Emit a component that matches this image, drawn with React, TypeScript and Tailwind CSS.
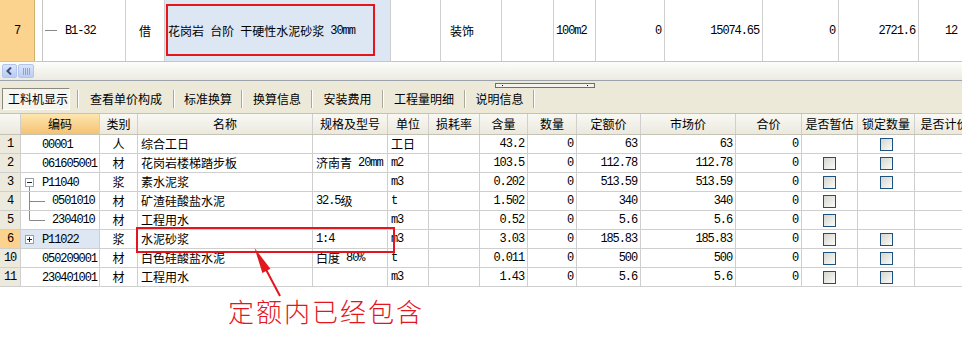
import React from 'react'

const MONO = "font-['Liberation_Mono',monospace] text-[12px] tracking-[-1.1px]"

function T({ s }: { s: string }) {
  const parts = s.split(/([\x20-\x7e]+)/).filter((p) => p !== '')
  return (
    <>
      {parts.map((p, i) =>
        /^[\x20-\x7e]+$/.test(p) ? (
          <span key={i} className={MONO}>
            {p}
          </span>
        ) : (
          <span key={i}>{p}</span>
        )
      )}
    </>
  )
}

function Check() {
  return <span className="block h-[13px] w-[13px] border border-[#1c5180] bg-linear-to-br from-[#d6d6cf] to-[#fbfbf8]" />
}

type Tree = 'plain' | 'minus' | 'plus' | 'child' | 'last'

function CodeCell({ tree, code }: { tree: Tree; code: string }) {
  if (tree === 'minus' || tree === 'plus') {
    return (
      <div className="flex items-center pl-[4px]">
        <svg width="13" height="19" viewBox="0 0 13 19" className="shrink-0">
          <rect x="0.5" y="5.5" width="8" height="8" fill="#fff" stroke="#97a0a8" />
          <line x1="2" y1="9.5" x2="7" y2="9.5" stroke="#222" />
          {tree === 'plus' && <line x1="4.5" y1="7" x2="4.5" y2="12" stroke="#222" />}
          {tree === 'minus' && <line x1="4.5" y1="14" x2="4.5" y2="19" stroke="#888" />}
        </svg>
        <span className="ml-[4px]">
          <T s={code} />
        </span>
      </div>
    )
  }
  if (tree === 'child' || tree === 'last') {
    return (
      <div className="flex items-center">
        <svg width="31" height="19" viewBox="0 0 31 19" className="shrink-0">
          <line x1="8.5" y1="0" x2="8.5" y2={tree === 'last' ? 9.5 : 19} stroke="#888" />
          <line x1="8.5" y1="9.5" x2="24" y2="9.5" stroke="#888" />
        </svg>
        <T s={code} />
      </div>
    )
  }
  return (
    <div className="pl-[21px]">
      <T s={code} />
    </div>
  )
}

const widths = [21, 79, 38, 175, 75, 41, 51, 48, 49, 64, 95, 66, 56, 57, 60]
const heads = ['', '编码', '类别', '名称', '规格及型号', '单位', '损耗率', '含量', '数量', '定额价', '市场价', '合价', '是否暂估', '锁定数量', '是否计价']

type Row = {
  n: string
  tree: Tree
  code: string
  cat: string
  name: string
  spec: string
  unit: string
  nums: string[]
  a: boolean
  b: boolean
  sel?: boolean
}

const rows: Row[] = [
  { n: '1', tree: 'plain', code: '00001', cat: '人', name: '综合工日', spec: '', unit: '工日', nums: ['43.2', '0', '63', '63', '0'], a: false, b: true },
  { n: '2', tree: 'plain', code: '061605001', cat: '材', name: '花岗岩楼梯踏步板', spec: '济南青 20mm', unit: 'm2', nums: ['103.5', '0', '112.78', '112.78', '0'], a: true, b: true },
  { n: '3', tree: 'minus', code: 'P11040', cat: '浆', name: '素水泥浆', spec: '', unit: 'm3', nums: ['0.202', '0', '513.59', '513.59', '0'], a: true, b: true },
  { n: '4', tree: 'child', code: '0501010', cat: '材', name: '矿渣硅酸盐水泥', spec: '32.5级', unit: 't', nums: ['1.502', '0', '340', '340', '0'], a: true, b: false },
  { n: '5', tree: 'last', code: '2304010', cat: '材', name: '工程用水', spec: '', unit: 'm3', nums: ['0.52', '0', '5.6', '5.6', '0'], a: true, b: false },
  { n: '6', tree: 'plus', code: 'P11022', cat: '浆', name: '水泥砂浆', spec: '1:4', unit: 'm3', nums: ['3.03', '0', '185.83', '185.83', '0'], a: true, b: true, sel: true },
  { n: '10', tree: 'plain', code: '050209001', cat: '材', name: '白色硅酸盐水泥', spec: '白度 80%', unit: 't', nums: ['0.011', '0', '500', '500', '0'], a: true, b: true },
  { n: '11', tree: 'plain', code: '230401001', cat: '材', name: '工程用水', spec: '', unit: 'm3', nums: ['1.43', '0', '5.6', '5.6', '0'], a: true, b: true },
]

const tabs: [string, number][] = [
  ['查看单价构成', 94],
  ['标准换算', 66],
  ['换算信息', 68],
  ['安装费用', 69],
  ['工程量明细', 80],
  ['说明信息', 67],
]

const cell = 'flex h-full shrink-0 items-center overflow-hidden whitespace-pre border-r border-[#cfcfcf]'

export default function App() {
  return (
    <div className="relative h-[354px] w-[962px] overflow-hidden bg-white font-['Noto_Sans_CJK_SC',sans-serif] text-[12px] leading-none text-black">
      {/* upper grid, last visible row */}
      <div className="flex h-[62px] border-b border-[#c4c4c4]">
        <div className="flex w-[35px] shrink-0 items-center justify-center border-r border-[#d0b070] bg-[#fbd38e]">
          <T s="7" />
        </div>
        <div className="w-[8px] shrink-0 border-r border-[#c4c4c4]" />
        <div className={`${cell} w-[83px] border-[#c4c4c4]`}>
          <span className="ml-[2px] mr-[8px] h-px w-[12px] bg-[#888]" />
          <T s="B1-32" />
        </div>
        <div className={`${cell} w-[39px] justify-center border-[#c4c4c4]`}>借</div>
        <div className={`${cell} w-[226px] border-[#c4c4c4] bg-[#dde6f3] pl-[3px]`}>
          <T s="花岗岩 台阶 干硬性水泥砂浆 30mm" />
        </div>
        <div className={`${cell} w-[50px] border-[#c4c4c4]`} />
        <div className={`${cell} w-[61px] border-[#c4c4c4] pl-[9px]`}>装饰</div>
        <div className={`${cell} w-[52px] border-[#c4c4c4]`} />
        <div className={`${cell} w-[42px] border-[#c4c4c4] pl-[2px]`}>
          <T s="100m2" />
        </div>
        <div className={`${cell} w-[69px] justify-end border-[#c4c4c4] pr-[3px]`}>
          <T s="0" />
        </div>
        <div className={`${cell} w-[98px] justify-end border-[#c4c4c4] pr-[3px]`}>
          <T s="15074.65" />
        </div>
        <div className={`${cell} w-[76px] justify-end border-[#c4c4c4] pr-[3px]`}>
          <T s="0" />
        </div>
        <div className={`${cell} w-[80px] justify-end border-[#c4c4c4] pr-[3px]`}>
          <T s="2721.6" />
        </div>
        <div className={`${cell} w-[60px] border-[#c4c4c4] pl-[26px]`}>
          <T s="12" />
        </div>
      </div>

      {/* horizontal scrollbar */}
      <div className="flex h-[19px] items-center gap-px border-b border-[#9ca3ad] bg-linear-to-b from-[#fdfdfb] to-[#ebeae2] pl-[2px]">
        <div className="flex h-[14px] w-[15px] items-center justify-center rounded-[2px] border border-[#b3c5ec] bg-linear-to-b from-[#dbe5fb] to-[#b8cbf3]">
          <svg width="7" height="8" viewBox="0 0 7 8">
            <path d="M5 0.5 L1.5 4 L5 7.5" fill="none" stroke="#3c4f7a" strokeWidth="2" />
          </svg>
        </div>
        <div className="flex h-[14px] w-[16px] items-center justify-center gap-px rounded-[2px] border border-[#b3c5ec] bg-linear-to-b from-[#dbe5fb] to-[#bccdf2]">
          <span className="h-[7px] w-px bg-[#8da2cc]" />
          <span className="h-[7px] w-px bg-[#8da2cc]" />
          <span className="h-[7px] w-px bg-[#8da2cc]" />
          <span className="h-[7px] w-px bg-[#8da2cc]" />
        </div>
      </div>

      {/* tab strip */}
      <div className="h-[32px] bg-[#ece9d8] pt-[2px]">
        <div className="ml-[495px] flex h-[5px] w-[100px] items-center justify-between border border-[#6e6e6e] bg-[#f3f2ec] px-[6px]">
          <span className="h-px w-px bg-black" />
          <span className="h-px w-px bg-black" />
        </div>
        <div className="flex h-[22px] items-center">
          <div className="ml-[2px] flex h-[22px] w-[68px] items-center border border-b-white border-l-[#8a8a80] border-r-white border-t-[#8a8a80] bg-[#f6f5ef] pl-[5px]">
            工料机显示
          </div>
          <div className="ml-[7px] h-[18px] w-[2px] border-l border-r border-l-[#aca899] border-r-white" />
          {tabs.map(([t, w]) => (
            <React.Fragment key={t}>
              <div className="flex items-center justify-center" style={{ width: w }}>
                {t}
              </div>
              <div className="h-[18px] w-[2px] border-l border-r border-l-[#aca899] border-r-white" />
            </React.Fragment>
          ))}
        </div>
      </div>

      {/* lower grid header */}
      <div className="flex h-[22px] border-b border-t border-[#c5c3b5] bg-linear-to-b from-[#f9f8f3] to-[#ebe9de]">
        {heads.map((h, i) => (
          <div
            key={i}
            className={`${cell} justify-center border-[#cdcbbf] ${i === 1 ? 'bg-linear-to-b from-[#fde6b0] to-[#f4c273]' : ''}`}
            style={{ width: widths[i] }}
          >
            {h}
          </div>
        ))}
      </div>

      {/* lower grid rows */}
      {rows.map((r) => (
        <div key={r.n} className="flex h-[19px] border-b border-[#cfcfcf]">
          <div
            className={`${cell} justify-center border-[#c5c3b5] ${r.sel ? 'bg-[#fbd38e]' : 'bg-[#ece9dd]'}`}
            style={{ width: widths[0] }}
          >
            <T s={r.n} />
          </div>
          <div className={`${cell} ${r.sel ? 'bg-[#dde6f3]' : ''}`} style={{ width: widths[1] }}>
            <CodeCell tree={r.tree} code={r.code} />
          </div>
          <div className={`${cell} justify-center`} style={{ width: widths[2] }}>
            {r.cat}
          </div>
          <div className={`${cell} pl-[3px]`} style={{ width: widths[3] }}>
            <T s={r.name} />
          </div>
          <div className={`${cell} pl-[3px]`} style={{ width: widths[4] }}>
            <T s={r.spec} />
          </div>
          <div className={`${cell} pl-[3px]`} style={{ width: widths[5] }}>
            <T s={r.unit} />
          </div>
          <div className={cell} style={{ width: widths[6] }} />
          {r.nums.map((v, j) => (
            <div key={j} className={`${cell} justify-end pr-[3px]`} style={{ width: widths[7 + j] }}>
              <T s={v} />
            </div>
          ))}
          <div className={`${cell} justify-center`} style={{ width: widths[12] }}>
            {r.a && <Check />}
          </div>
          <div className={`${cell} justify-center`} style={{ width: widths[13] }}>
            {r.b && <Check />}
          </div>
          <div className={cell} style={{ width: widths[14] }} />
        </div>
      ))}

      {/* annotation */}
      <div className="pl-[228px] pt-[9px] font-['Noto_Sans_CJK_SC',sans-serif] text-[26px] leading-[30px] font-light tracking-[2px] text-[#e3161d]">
        定额内已经包含
      </div>

      {/* red highlight boxes and arrow */}
      <div className="absolute left-[166px] top-[4px] h-[52px] w-[209px] border-2 border-[#e3161d]" />
      <div className="absolute left-[136px] top-[227px] h-[26px] w-[259px] border-2 border-[#e3161d]" />
      <svg className="absolute left-0 top-0" width="962" height="354" viewBox="0 0 962 354">
        <line x1="262" y1="262" x2="280" y2="296" stroke="#e3161d" strokeWidth="2" />
        <polygon points="254.5,248 262.4,273 270.4,268.8" fill="#e3161d" />
      </svg>
    </div>
  )
}
